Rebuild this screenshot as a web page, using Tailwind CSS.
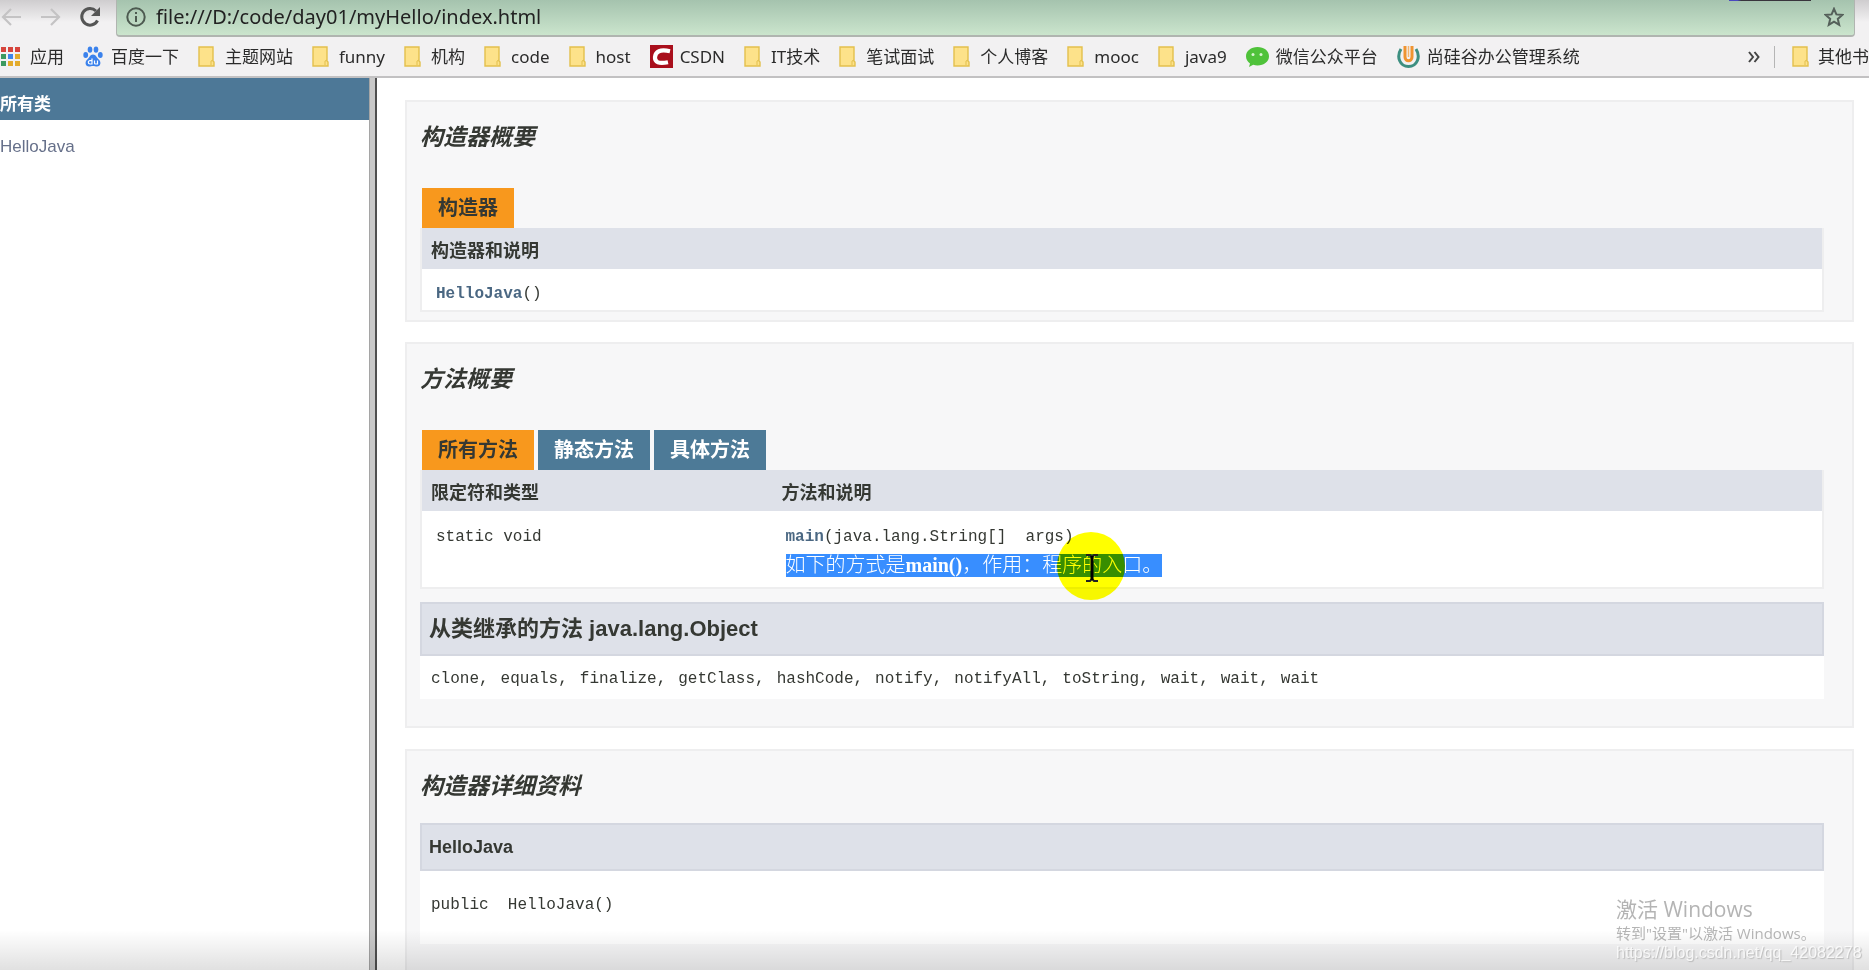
<!DOCTYPE html>
<html lang="zh-CN">
<head>
<meta charset="utf-8">
<title>HelloJava</title>
<script src="https://cdn.jsdelivr.net/npm/@tailwindcss/browser@4"></script>
</head>
<body class="relative flex h-screen flex-col overflow-hidden bg-white font-['Liberation_Sans','Noto_Sans_CJK_SC',sans-serif] text-[#353833]">
<svg class="hidden">
  <symbol id="folder" viewBox="0 0 17 21"><path d="M1 1h14v14l1 1v4H1z" fill="#fde28a" stroke="#e3c04d" stroke-width="1.4"/><path d="M13 19v-4l2-1" fill="none" stroke="#e3c04d"/></symbol>
</svg>

<header class="bg-[#f2f1f2] font-['Noto_Sans','Noto_Sans_CJK_SC',sans-serif] text-[#2b2b2b]">
  <div class="flex h-[37px] bg-linear-to-b from-[#cfcdcf] to-[#f2f1f2] to-60% pr-[14px]">
    <nav class="flex w-[116px] shrink-0 items-center pb-[3px]">
      <button aria-label="后退" class="ml-[1px]"><svg class="h-[22px] w-[22px]" viewBox="0 0 22 22" fill="none" stroke="#c4c3c4" stroke-width="2.2"><path d="M20 11H2M10 3l-8 8 8 8"/></svg></button>
      <button aria-label="前进" class="ml-[17px]"><svg class="h-[22px] w-[22px]" viewBox="0 0 22 22" fill="none" stroke="#c4c3c4" stroke-width="2.2"><path d="M1 11h18M11 3l8 8-8 8"/></svg></button>
      <button aria-label="重新加载" class="ml-[17px]"><svg class="h-[22px] w-[22px]" viewBox="0 0 22 22"><path d="M18.500 14.500A8.300 8.300 0 1 1 17 5" fill="none" stroke="#555" stroke-width="3"/><path d="M21 1v9h-9z" fill="#555"/></svg></button>
    </nav>
    <div class="flex flex-1 items-center gap-[10px] rounded-b-[4px] border border-t-0 border-b-2 border-[#b0b5b0] bg-linear-to-b from-[#a5c3ae] to-[#cbe5cd] pr-[10px] pb-[2px] pl-[9px]">
      <svg class="h-[20px] w-[20px]" viewBox="0 0 20 20" fill="none" stroke="#4d5a50" stroke-width="2"><circle cx="10" cy="10" r="8.700"/><path d="M10 9v6M10 5v2"/></svg>
      <input aria-label="地址" value="file:///D:/code/day01/myHello/index.html" class="flex-1 bg-transparent text-[20px] leading-[28px] text-[#222] outline-none">
      <button aria-label="收藏"><svg class="h-[20px] w-[20px]" viewBox="0 0 20 20" fill="none" stroke="#55605a" stroke-width="2"><path d="M10 1.800l2.400 5.600 6 .5-4.600 4 1.400 6L10 14.700l-5.200 3.200 1.400-6-4.600-4 6-.5z"/></svg></button>
    </div>
  </div>
  <nav class="flex h-[41px] items-center gap-[19px] overflow-hidden border-b-2 border-[#c2c1c2] text-[17px] leading-[24px] whitespace-nowrap [&>a]:flex [&>a]:shrink-0 [&>a]:items-center">
    <a href="#" class="gap-[10px] pl-px"><svg class="h-[19px] w-[19px]" viewBox="0 0 19 19"><g fill="#d6453d"><path d="M0 0h5v5H0zM7 0h5v5H7zM14 0h5v5h-5z"/></g><path d="M0 7h5v5H0zM0 14h5v5H0z" fill="#3c9a5f"/><path d="M7 7h5v5H7z" fill="#3f87ea"/><path d="M14 7h5v5h-5zM7 14h5v5H7zM14 14h5v5h-5z" fill="#e3ac2c"/></svg>应用</a>
    <a href="#" class="gap-[8px]"><svg class="h-[21px] w-[20px]" viewBox="0 0 20 21"><g fill="#3b82ec"><ellipse cx="2.700" cy="9" rx="2.400" ry="3"/><ellipse cx="7" cy="3.600" rx="2.300" ry="3.200"/><ellipse cx="13" cy="3.600" rx="2.300" ry="3.200"/><ellipse cx="17.300" cy="9" rx="2.400" ry="3"/><path d="M10 8.500c3 0 3.500 3 5.500 4.700 3.200 2.600 2.200 7.300-1.500 7.300-1.500 0-2.500-.5-4-.5s-2.500.5-4 .5c-3.700 0-4.700-4.700-1.500-7.300C6.500 11.500 7 8.500 10 8.500z"/></g><path d="M9 12.500V18H7a1.700 1.700 0 1 1 0-3.400h2M11.500 14.500v2.500q0 1 1 1h2v-3.500" fill="none" stroke="#fff" stroke-width="1.200"/></svg>百度一下</a>
    <a href="#" class="gap-[10px]"><svg class="h-[21px] w-[17px]"><use href="#folder"/></svg>主题网站</a>
    <a href="#" class="gap-[10px]"><svg class="h-[21px] w-[17px]"><use href="#folder"/></svg>funny</a>
    <a href="#" class="gap-[10px]"><svg class="h-[21px] w-[17px]"><use href="#folder"/></svg>机构</a>
    <a href="#" class="gap-[10px]"><svg class="h-[21px] w-[17px]"><use href="#folder"/></svg>code</a>
    <a href="#" class="gap-[10px]"><svg class="h-[21px] w-[17px]"><use href="#folder"/></svg>host</a>
    <a href="#" class="gap-[7px]"><svg class="h-[23px] w-[23px]" viewBox="0 0 23 23"><path d="M0 0h23v23H0z" fill="#a90f1c"/><path d="M20 6.200C10 4 5.500 6.500 5 12c-.5 5.500 4 7 13 5.200" fill="none" stroke="#fff" stroke-width="4.200"/></svg>CSDN</a>
    <a href="#" class="gap-[10px]"><svg class="h-[21px] w-[17px]"><use href="#folder"/></svg>IT技术</a>
    <a href="#" class="gap-[10px]"><svg class="h-[21px] w-[17px]"><use href="#folder"/></svg>笔试面试</a>
    <a href="#" class="gap-[10px]"><svg class="h-[21px] w-[17px]"><use href="#folder"/></svg>个人博客</a>
    <a href="#" class="gap-[10px]"><svg class="h-[21px] w-[17px]"><use href="#folder"/></svg>mooc</a>
    <a href="#" class="gap-[10px]"><svg class="h-[21px] w-[17px]"><use href="#folder"/></svg>java9</a>
    <a href="#" class="gap-[7px]"><svg class="h-[20px] w-[23px]" viewBox="0 0 23 20"><path d="M11.500 0C5 0 0 4 0 9.200c0 3 1.500 5.500 4 7.300L3 20l4.200-2.200c1.400.4 2.800.6 4.300.6C18 18.400 23 14.500 23 9.200S18 0 11.500 0z" fill="#4fc23a"/><circle cx="7" cy="7.500" r="1.500" fill="#d9f5d2"/><circle cx="15" cy="7.500" r="1.500" fill="#d9f5d2"/></svg>微信公众平台</a>
    <a href="#" class="gap-[7px]"><svg class="h-[24px] w-[23px]" viewBox="0 0 23 24" fill="none"><path d="M4 4C-1 12 3 21.500 11.500 21.500S24 12 19 4" stroke="#3d8f80" stroke-width="3"/><path d="M8 1v11c0 5 7 5 7 0V1" stroke="#ef9430" stroke-width="3"/><path d="M11.500 1v11" stroke="#f3b46c" stroke-width="1.500"/></svg>尚硅谷办公管理系统</a>
    <div class="ml-auto flex items-center gap-[14px]">
      <button aria-label="更多书签"><svg class="h-[12px] w-[12px]" viewBox="0 0 12 12" fill="none" stroke="#444" stroke-width="2"><path d="M1 1l4 5-4 5M6.500 1l4 5-4 5"/></svg></button>
      <span class="h-[22px] w-px bg-[#b5b5b5]"></span>
      <a href="#" class="flex items-center gap-[9px] pl-[3px]"><svg class="h-[21px] w-[17px] shrink-0"><use href="#folder"/></svg>其他书</a>
    </div>
  </nav>
</header>

<div class="flex min-h-0 flex-1">
  <aside class="w-[369px] shrink-0">
    <h1 class="h-[42px] bg-[#4d7897] pt-[14px] text-[17px] leading-[26px] font-bold text-white">所有类</h1>
    <a href="#" class="mt-[14px] block text-[17px] leading-[26px] text-[#66708a]">HelloJava</a>
  </aside>
  <div class="w-[8px] shrink-0 border-r-2 border-l border-r-[#4f4f4f] border-l-[#a5a5a5] bg-[#c9c9c9]"></div>

  <main class="min-w-0 flex-1 overflow-hidden pt-[22px] pr-[15px] pl-[28px]">
    <section class="border-2 border-[#eeeeef] bg-[#f7f7f8] pt-[18px] pr-[28px] pb-[8px] pl-[13px]">
      <h2 class="text-[23px] leading-[34px] font-bold italic">构造器概要</h2>
      <div class="ml-[2px] mt-[34px] flex text-[20px] leading-[40px] font-bold"><span class="bg-[#f8981d] px-[16px]">构造器</span></div>
      <table class="w-full border-collapse border-2 border-t-0 border-[#eeeeef] bg-white">
        <tr class="bg-[#dee1e9]"><th class="h-[41px] pt-[5px] pl-[9px] text-left text-[18px] leading-[26px] font-bold">构造器和说明</th></tr>
        <tr><td class="h-[42px] pt-[8px] pl-[14px] font-['Liberation_Mono',monospace] text-[16px] leading-[24px]"><a href="#" class="font-bold text-[#4a6782]">HelloJava</a>()</td></tr>
      </table>
    </section>

    <section class="mt-[20px] border-2 border-[#eeeeef] bg-[#f7f7f8] pt-[18px] pr-[28px] pb-[27px] pl-[13px]">
      <h2 class="text-[23px] leading-[34px] font-bold italic">方法概要</h2>
      <div class="ml-[2px] mt-[34px] flex gap-[4px] text-[20px] leading-[40px] font-bold">
        <button class="bg-[#f8981d] px-[16px]">所有方法</button>
        <button class="bg-[#4d7a97] px-[16px] text-white">静态方法</button>
        <button class="bg-[#4d7a97] px-[16px] text-white">具体方法</button>
      </div>
      <table class="w-full table-fixed border-collapse border-2 border-t-0 border-[#eeeeef] bg-white">
        <tr class="bg-[#dee1e9] text-left text-[18px] leading-[26px]"><th class="h-[41px] w-1/4 pt-[5px] pl-[9px] font-bold">限定符和类型</th><th class="pt-[5px] pl-[10px] font-bold">方法和说明</th></tr>
        <tr class="align-top font-['Liberation_Mono',monospace] text-[16px] leading-[24px]">
          <td class="h-[77px] pt-[14px] pl-[14px]">static void</td>
          <td class="pt-[14px] pl-[14px]">
            <code class="block whitespace-pre font-['Liberation_Mono',monospace]"><a href="#" class="font-bold text-[#4a6782]">main</a>(java.lang.String[]  args)</code>
            <div class="relative mt-[5px] w-fit bg-[#388eff] font-['Liberation_Serif','Noto_Sans_CJK_SC',serif] text-[20px] leading-[23px] font-light text-white">如下的方式是<b class="font-bold">main()</b>，作用：程序的入口。
              <svg class="absolute -top-[24px] left-[269px] h-[72px] w-[72px] mix-blend-darken" viewBox="0 0 72 72"><circle cx="36" cy="36" r="34" fill="#ffff00"/></svg>
              <svg class="absolute top-0 left-[299px] h-[28px] w-[14px]" viewBox="0 0 14 28"><path d="M1 1h4l2 2 2-2h4M1 27h4l2-2 2 2h4" fill="none" stroke="#222" stroke-width="2"/><path d="M7 2v24" stroke="#000" stroke-width="3"/></svg>
            </div>
          </td>
        </tr>
      </table>
      <h3 class="mt-[13px] border-2 border-[#d4d7e0] bg-[#dee1e9] px-[7px] py-[8px] text-[22px] leading-[34px] font-bold">从类继承的方法 java.lang.Object</h3>
      <div class="flex h-[43px] items-center gap-x-[12px] bg-white pt-[2px] pl-[11px] font-['Liberation_Mono',monospace] text-[16px] leading-[24px]">
        <span>clone,</span><span>equals,</span><span>finalize,</span><span>getClass,</span><span>hashCode,</span><span>notify,</span><span>notifyAll,</span><span>toString,</span><span>wait,</span><span>wait,</span><span>wait</span>
      </div>
    </section>

    <section class="mt-[21px] border-2 border-[#eeeeef] bg-[#f7f7f8] pt-[18px] pr-[28px] pb-[40px] pl-[13px]">
      <h2 class="text-[23px] leading-[34px] font-bold italic">构造器详细资料</h2>
      <h3 class="mt-[20px] border-2 border-[#d4d7e0] bg-[#dee1e9] px-[7px] py-[9px] text-[18px] leading-[26px] font-bold">HelloJava</h3>
      <pre class="h-[73px] bg-white pt-[22px] pl-[11px] font-['Liberation_Mono',monospace] text-[16px] leading-[24px]">public  HelloJava()</pre>
    </section>
  </main>
</div>

<div class="pointer-events-none absolute inset-x-0 bottom-0 h-[40px] bg-linear-to-b from-black/0 to-black/12"></div>
<div class="absolute top-0 right-[58px] h-[1px] w-[82px] bg-linear-to-r from-[#4a48c0] from-10% to-[#38343c] to-15%"></div>
<div class="pointer-events-none absolute right-[9px] bottom-[8px] w-[244px] font-['Open_Sans','Noto_Sans_CJK_SC',sans-serif] whitespace-nowrap text-[#b4b4b4]">
  <p class="text-[21px] leading-[26px]">激活 Windows</p>
  <p class="text-[15px] leading-[22px]">转到"设置"以激活 Windows。</p>
  <p class="font-['Liberation_Sans',sans-serif] text-[16px] leading-[18px] text-white/80 [text-shadow:1px_1px_1px_#bbb]">https://blog.csdn.net/qq_42082278</p>
</div>
</body>
</html>
